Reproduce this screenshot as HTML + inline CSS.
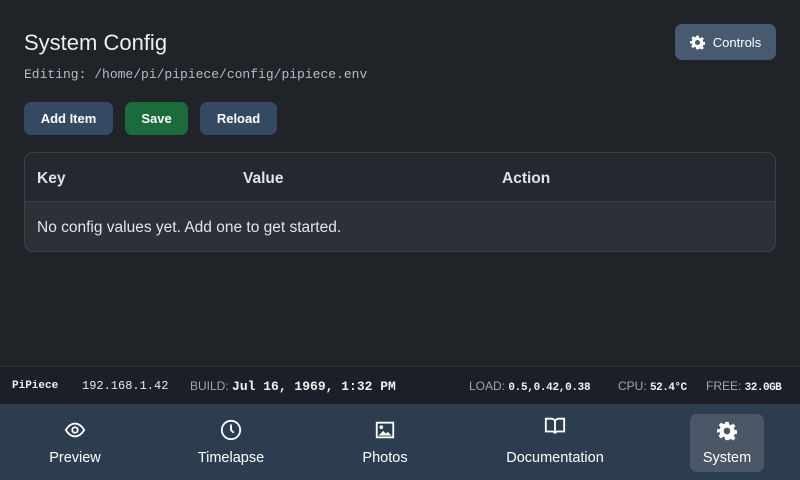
<!DOCTYPE html>
<html><head><style>
*{margin:0;padding:0;box-sizing:border-box}
body{width:800px;height:480px;background:#202328;font-family:"Liberation Sans",sans-serif;color:#e6e8eb;position:relative;overflow:hidden}
.abs{position:absolute}
h1{position:absolute;left:24px;top:30px;font-size:22px;font-weight:400;color:#eceef0}
.path{left:24px;top:67px;font-family:"Liberation Mono",monospace;font-size:13px;color:#b8bcc2}
.btn{position:absolute;top:102px;height:33px;border-radius:7px;font-weight:700;font-size:13px;color:#fff;display:flex;align-items:center;justify-content:center}
.ctrl{left:675px;top:24px;width:101px;height:36px;border-radius:7px;background:#475a70;display:flex;align-items:center;justify-content:center;font-size:13px;color:#fff;gap:8px}
.table{left:24px;top:152px;width:752px;height:100px;border:1px solid #3b3f46;border-radius:9px;overflow:hidden;background:#2c3038}
.th{height:49px;background:#25282e;border-bottom:1px solid #3b3f46;position:relative;font-size:15.5px;font-weight:700;color:#dfe2e6}
.th span{position:absolute;top:17px}
.td{position:absolute;left:12px;top:66px;font-size:15.5px;color:#e2e5e8}
.status{left:0;top:366px;width:800px;height:38px;background:#1b2028;border-top:1px solid #2e3742;font-size:12px;color:#9ea5ae}
.status span{position:absolute;top:12px}
.mono{font-family:"Liberation Mono",monospace;font-weight:700;color:#f0f0f0}
.nav{left:0;top:404px;width:800px;height:76px;background:#2c3d50}
.item{position:absolute;top:0;height:76px;display:flex;flex-direction:column;align-items:center;font-size:14.5px;color:#fff}
.item svg{margin-top:15px;height:22px}
.item div{margin-top:9px}
</style></head><body>
<h1>System Config</h1>
<div class="abs path">Editing: /home/pi/pipiece/config/pipiece.env</div>
<div class="btn" style="left:24px;width:89px;background:#354a62">Add Item</div>
<div class="btn" style="left:125px;width:63px;background:#1b6b3b">Save</div>
<div class="btn" style="left:200px;width:77px;background:#354a62">Reload</div>
<div class="abs ctrl"><svg width="15" height="15" viewBox="0 0 24 24"><path fill="#fff" d="M10 1h4l.6 3.2 2 .9 2.7-1.9 2.8 2.8-1.9 2.7.9 2 3.2.6v4l-3.2.6-.9 2 1.9 2.7-2.8 2.8-2.7-1.9-2 .9L14 23h-4l-.6-3.2-2-.9-2.7 1.9-2.8-2.8 1.9-2.7-.9-2L0 14v-4l3.2-.6.9-2L2.2 4.7 5 1.9l2.7 1.9 2-.9z"/><circle cx="12" cy="12" r="4" fill="#475a70"/></svg>Controls</div>
<div class="abs table"><div class="th"><span style="left:12px">Key</span><span style="left:218px">Value</span><span style="left:477px">Action</span></div>
<div class="td">No config values yet. Add one to get started.</div></div>
<div class="abs status">
<span class="mono" style="left:12px;font-size:11px;top:13px">PiPiece</span>
<span class="mono" style="left:82px;font-weight:400;font-size:12px;color:#e8e8e8">192.168.1.42</span>
<span style="left:190px">BUILD: <b class="mono" style="font-size:13px">Jul 16, 1969, 1:32 PM</b></span>
<span style="left:469px">LOAD: <b class="mono" style="font-size:11px;letter-spacing:-0.3px">0.5,0.42,0.38</b></span>
<span style="left:618px">CPU: <b class="mono" style="font-size:11px;letter-spacing:-0.5px">52.4°C</b></span>
<span style="left:706px">FREE: <b class="mono" style="font-size:11px;letter-spacing:-0.5px">32.0GB</b></span>
</div>
<div class="abs nav">
<div class="item" style="left:44px;width:62px"><svg width="24" viewBox="0 0 24 24" fill="none" stroke="#fff" stroke-width="2"><path d="M2 12c3-5 6-7 10-7s7 2 10 7c-3 5-6 7-10 7s-7-2-10-7z"/><circle cx="12" cy="12" r="3"/></svg><div>Preview</div></div>
<div class="item" style="left:194px;width:74px"><svg width="24" viewBox="0 0 24 24" fill="none" stroke="#fff" stroke-width="2"><circle cx="12" cy="12" r="10"/><path d="M12 6v6l3 3"/></svg><div>Timelapse</div></div>
<div class="item" style="left:358px;width:54px"><svg width="24" viewBox="0 0 24 24" fill="none" stroke="#fff" stroke-width="2"><rect x="3" y="4" width="18" height="16"/><circle cx="8" cy="9" r="1" fill="#fff"/><path d="M5 18l5-5 3 3 2-2 4 4z" fill="#fff" stroke="none"/></svg><div>Photos</div></div>
<div class="item" style="left:503px;width:104px"><svg width="24" viewBox="0 0 24 24" fill="none" stroke="#fff" stroke-width="2" style="margin-top:11px"><path d="M2 4h6a4 4 0 0 1 4 3v13a3 3 0 0 0-3-2H2zM22 4h-6a4 4 0 0 0-4 3v13a3 3 0 0 1 3-2h7z"/></svg><div style="margin-top:13px">Documentation</div></div>
<div class="item" style="left:690px;top:10px;width:74px;height:58px;background:#4b5666;border-radius:7px"><svg width="20" viewBox="0 0 24 24" style="margin-top:6px"><path fill="#fff" d="M10 1h4l.6 3.2 2 .9 2.7-1.9 2.8 2.8-1.9 2.7.9 2 3.2.6v4l-3.2.6-.9 2 1.9 2.7-2.8 2.8-2.7-1.9-2 .9L14 23h-4l-.6-3.2-2-.9-2.7 1.9-2.8-2.8 1.9-2.7-.9-2L0 14v-4l3.2-.6.9-2L2.2 4.7 5 1.9l2.7 1.9 2-.9z"/><circle cx="12" cy="12" r="4" fill="#4b5666"/></svg><div style="margin-top:8px">System</div></div>
</div>
</body></html>
